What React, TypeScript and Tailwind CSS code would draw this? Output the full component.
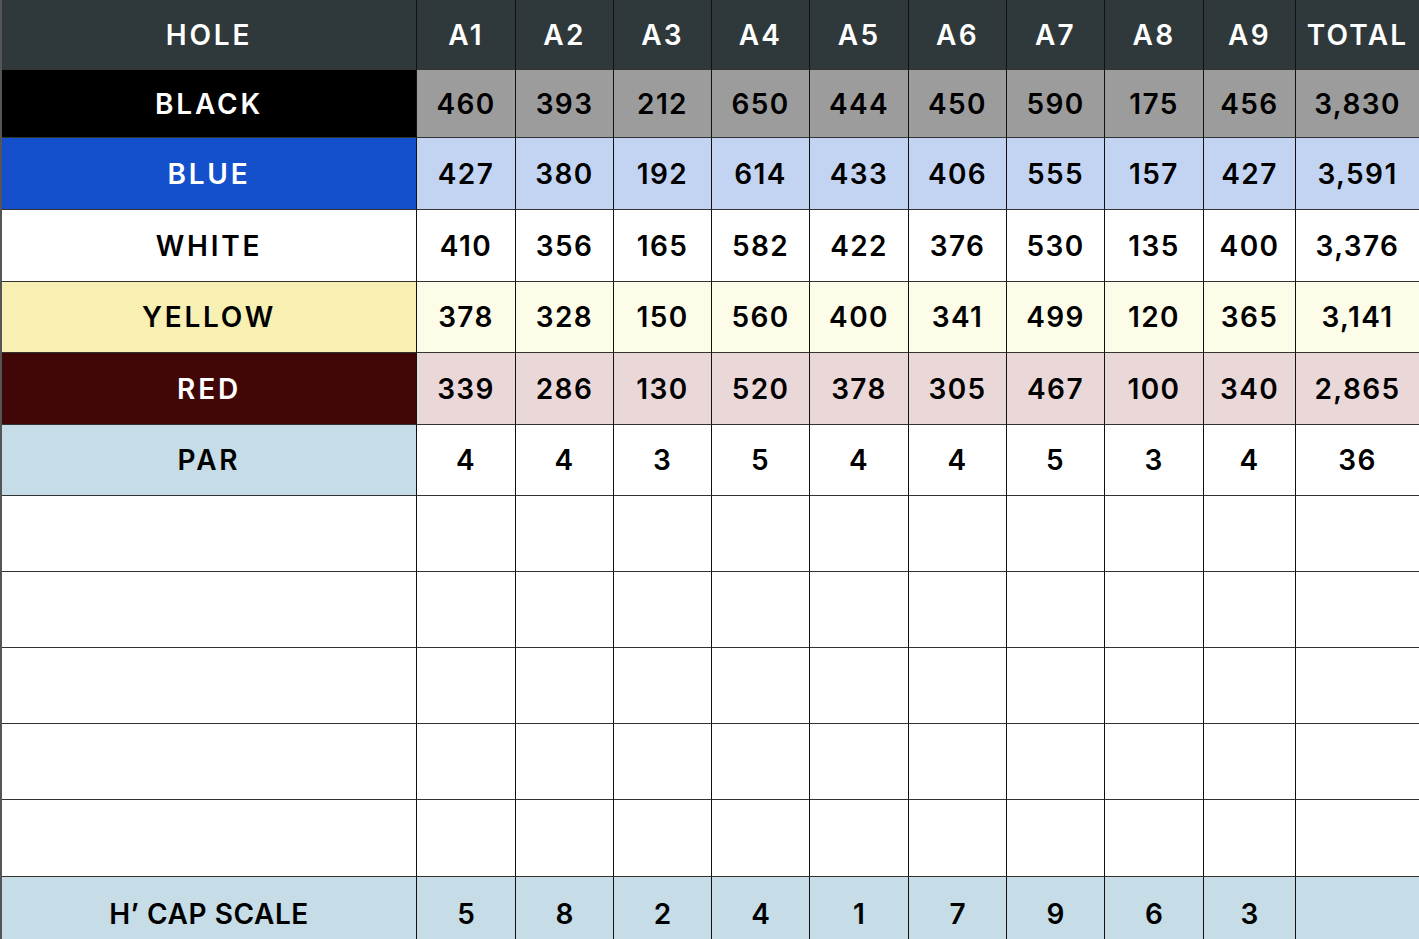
import React from "react";

type Row = {
  label: string;
  labelClass: string;
  cellClass: string;
  values: string[];
  height: string;
};

const holes = ["A1", "A2", "A3", "A4", "A5", "A6", "A7", "A8", "A9"];

const rows: Row[] = [
  {
    label: "BLACK",
    labelClass: "bg-black text-white",
    cellClass: "bg-[#9c9c9c] text-black",
    values: ["460", "393", "212", "650", "444", "450", "590", "175", "456", "3,830"],
    height: "h-[68px]",
  },
  {
    label: "BLUE",
    labelClass: "bg-[#1550cc] text-white",
    cellClass: "bg-[#c2d4f2] text-black",
    values: ["427", "380", "192", "614", "433", "406", "555", "157", "427", "3,591"],
    height: "h-[72px]",
  },
  {
    label: "WHITE",
    labelClass: "bg-white text-black",
    cellClass: "bg-white text-black",
    values: ["410", "356", "165", "582", "422", "376", "530", "135", "400", "3,376"],
    height: "h-[72px]",
  },
  {
    label: "YELLOW",
    labelClass: "bg-[#f7f0b2] text-black",
    cellClass: "bg-[#fdfce9] text-black",
    values: ["378", "328", "150", "560", "400", "341", "499", "120", "365", "3,141"],
    height: "h-[71px]",
  },
  {
    label: "RED",
    labelClass: "bg-[#410707] text-white",
    cellClass: "bg-[#ead7d8] text-black",
    values: ["339", "286", "130", "520", "378", "305", "467", "100", "340", "2,865"],
    height: "h-[72px]",
  },
  {
    label: "PAR",
    labelClass: "bg-[#c6dce6] text-black",
    cellClass: "bg-white text-black",
    values: ["4", "4", "3", "5", "4", "4", "5", "3", "4", "36"],
    height: "h-[71px]",
  },
];

// first column sits after the 2px left edge
const cols =
  "grid grid-cols-[415px_99px_98px_98px_98px_99px_98px_98px_99px_92px_1fr]";
const cell =
  "flex items-center justify-center border-r border-b border-r-[#111] border-b-[#333]";
const blanks = ["h-[76px]", "h-[76px]", "h-[76px]", "h-[76px]", "h-[77px]"];
const hcap = ["5", "8", "2", "4", "1", "7", "9", "6", "3", ""];

export default function App() {
  return (
    <div
      className="w-[1419px] h-[939px] overflow-hidden bg-white border-l-2 border-[#555] text-[28px] font-semibold"
      style={{ fontFamily: "Inter, 'Noto Sans', sans-serif" }}
    >
      <div className={`${cols} h-[70px] bg-[#2f393b] text-white`}>
        <div className={`${cell} tracking-[0.1em]`}>HOLE</div>
        {holes.map((h) => (
          <div key={h} className={`${cell} tracking-[0.08em]`}>
            {h}
          </div>
        ))}
        <div className={`${cell} tracking-[0.08em] border-r-0`}>TOTAL</div>
      </div>

      {rows.map((r) => (
        <div key={r.label} className={`${cols} ${r.height}`}>
          <div className={`${cell} ${r.labelClass} tracking-[0.1em]`}>{r.label}</div>
          {r.values.map((v, i) => (
            <div
              key={i}
              className={`${cell} ${r.cellClass} tracking-[0.05em] ${i === 9 ? "border-r-0" : ""}`}
            >
              {v}
            </div>
          ))}
        </div>
      ))}

      {blanks.map((h, j) => (
        <div key={j} className={`${cols} ${h}`}>
          {Array.from({ length: 11 }).map((_, i) => (
            <div key={i} className={`${cell} ${i === 10 ? "border-r-0" : ""}`} />
          ))}
        </div>
      ))}

      <div className={`${cols} h-[74px] bg-[#c6dce6] text-black`}>
        <div className={`${cell} tracking-[0.02em]`}>H’ CAP SCALE</div>
        {hcap.map((v, i) => (
          <div key={i} className={`${cell} ${i === 9 ? "border-r-0" : ""}`}>
            {v}
          </div>
        ))}
      </div>
    </div>
  );
}
